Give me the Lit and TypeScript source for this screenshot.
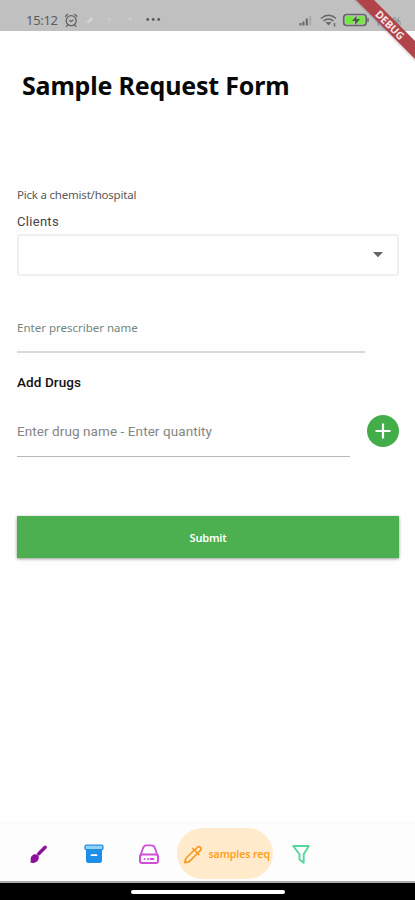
import { LitElement, html, css, svg } from "lit";
import { customElement } from "lit/decorators.js";

@customElement("status-bar")
class StatusBar extends LitElement {
  static styles = css`
    :host { display: flex; align-items: center; box-sizing: border-box; height: 31px; padding: 8px 12px 0 26px; background: #c0c0c0; color: #5c5c5c; font: 13px "Noto Sans", sans-serif; }
    .time { width: 37px; line-height: 20px; letter-spacing: -0.3px; white-space: nowrap; }
    .left { flex: none; width: 136px; height: 20px; }
    .right { flex: none; width: 104px; height: 20px; margin-left: auto; }
  `;
  render() {
    return html`
      <span class="time">15:12</span>
      <svg class="left" viewBox="63 9 136 20" fill="none" stroke="#626262">
        <circle cx="71.2" cy="19.700" r="5" stroke-width="1.3" />
        <path d="M65 15.800l3-2.8M77.4 15.800l-3-2.8M67.6 24l-1.5 1.8M74.8 24l1.5 1.8M69.2 19.3l2 1.3 2.2-2" stroke-width="1.2" />
        <path d="M87.5 21.5l5-4.5" stroke="#d3d3d3" stroke-width="3" />
        <path d="M108 17l3 3M129 17l2.5 2.5" stroke="#cbcbcb" stroke-width="2.5" />
        <g fill="#5c5c5c" stroke="none"><circle cx="147.7" cy="18.5" r="1.4" /><circle cx="153.2" cy="18.5" r="1.4" /><circle cx="158.7" cy="18.5" r="1.4" /></g>
      </svg>
      <svg class="right" viewBox="299 9 104 20" fill="none" stroke="#666">
        <path d="M300.5 24.500v-2.500M303.5 24.500v-4M306.8 24.500v-7" stroke-width="2" />
        <path d="M310.2 24.500v-9.500" stroke="#aaa" stroke-width="2" />
        <path d="M321 17.500q7.500-6.500 15 0M323.500 20q5-4 10 0" stroke-width="1.6" />
        <path d="M325.500 21h6l-3 3.500z" fill="#666" stroke="none" />
        <path d="M334.500 25.500v-3.500" stroke-width="1.500" />
        <rect x="343.700" y="13.500" width="22.500" height="11" rx="3" stroke-width="1.700" />
        <rect x="345.500" y="15.300" width="7.500" height="7.500" fill="#73e83f" stroke="none" />
        <rect x="357.300" y="15.300" width="7.200" height="7.500" fill="#73e83f" stroke="none" />
        <path d="M356.500 14.500l-4.500 5.500h3v4l5-6h-3.500z" fill="#4c5a48" stroke="none" />
        <path d="M368 17v4" stroke-width="1.500" />
        <text x="375" y="24.500" font-size="12" fill="#888" stroke="none" textLength="26" lengthAdjust="spacingAndGlyphs">100%</text>
      </svg>`;
  }
}

@customElement("bottom-nav")
class BottomNav extends LitElement {
  static styles = css`
    :host { display: block; }
    .tabs { display: flex; align-items: center; box-sizing: border-box; height: 60px; padding: 2px 0 0 27px; background: #fdfdfd; border-top: 1px solid #fafafa; border-bottom: 2px solid #aaa; }
    .tab { display: flex; align-items: center; justify-content: center; width: 22px; height: 22px; }
    .box { margin-left: 34px; }
    .drive { margin-left: 33px; }
    .active { width: 96px; height: 51px; box-sizing: border-box; margin-left: 17px; padding: 0 3px 0 5px; border-radius: 26px; background: #ffeacc; justify-content: space-between; }
    .filter { margin-left: 17px; }
    .label { color: #ff9d1c; font: 600 10.5px/20px "Noto Sans", sans-serif; letter-spacing: -.05px; padding-top: 1px; white-space: nowrap; }
    svg { display: block; width: 22px; height: 22px; flex: none; }
    .home { display: flex; justify-content: center; box-sizing: border-box; height: 17px; padding-top: 7px; background: #000; }
    .pill { width: 154px; height: 4px; border-radius: 2px; background: #fff; }
  `;
  icon(body: unknown) {
    return html`<svg viewBox="0 0 22 22" fill="none" stroke-linejoin="round" stroke-linecap="round">${body}</svg>`;
  }
  render() {
    return html`
      <div class="tabs">
        <div class="tab">${this.icon(svg`
          <path d="M11.700 10.800L18.200 4.300" stroke="#8e0f9e" stroke-width="3.400" />
          <path d="M8.500 11.200c2.900.2 4.100 2.700 3 5-1.500 3.600-5.400 4.500-8.500 3 1-.6.7-1.500.7-2.800 0-2.900 1.800-5.300 4.800-5.200z" fill="#8e0f9e" />`)}</div>
        <div class="tab box">${this.icon(svg`
          <path d="M3 7h16v10.500a2.500 2.500 0 0 1-2.500 2.500h-11a2.500 2.500 0 0 1-2.500-2.500z" fill="#1d8fe8" />
          <rect x="2" y="2.200" width="18" height="4.500" rx="1.500" fill="#8fd3f8" stroke="#278ddd" stroke-width="1.300" />
          <path d="M8.500 12.200h5" stroke="#fff" stroke-width="1.800" />`)}</div>
        <div class="tab drive">${this.icon(svg`
          <path d="M2.600 12.200l2.400-7q.9-2.800 3.600-2.800h4.800q2.700 0 3.600 2.800l2.400 7" stroke="#cf50d8" stroke-width="1.800" />
          <rect x="2" y="11.500" width="18" height="8.500" rx="2" stroke="#cf50d8" stroke-width="2" />
          <path d="M6.500 16h.1M10 16h.1M12.500 16h3" stroke="#cf50d8" stroke-width="1.800" />`)}</div>
        <div class="tab active">${this.icon(svg`
          <path d="M12.200 7l-8.500 8.500-.9 4.200 4.200-.9 8.500-8.500M10.800 5.500l6 6M12.700 7.300l2.700-3q1.500-1.500 3 0t0 3l-3 3" stroke="#f99a22" stroke-width="1.700" />`)}
          <span class="label">samples req</span></div>
        <div class="tab filter">${this.icon(svg`
          <path d="M3.200 3h15.600l-5.100 8.300v8.500l-4.200-3.200v-5.300z" stroke="#55d69d" stroke-width="1.900" />`)}</div>
      </div>
      <div class="home"><div class="pill"></div></div>`;
  }
}

@customElement("app-root")
class AppRoot extends LitElement {
  static styles = css`
    :host { display: flex; flex-direction: column; position: relative; height: 900px; overflow: hidden; background: #fefefe; font-family: "Noto Sans", sans-serif; }
    .form { flex: 1; display: flex; flex-direction: column; padding: 0 17px; white-space: nowrap; }
    .title { margin: 36px 0 0 5px; font-size: 25px; line-height: 36px; font-weight: 700; letter-spacing: -.18px; color: #080808; }
    .hint { margin-top: 83px; font-size: 11.5px; line-height: 18px; letter-spacing: -.21px; color: #595959; }
    .label { margin-top: 8px; font: 13px/20px Roboto, sans-serif; color: #444; letter-spacing: .3px; }
    .select { display: flex; align-items: center; justify-content: flex-end; box-sizing: border-box; width: 382px; height: 42px; margin-top: 2px; padding-right: 13px; border: 2px solid #efefef; border-radius: 3px; }
    .arrow { width: 12px; height: 6px; }
    .prescriber { box-sizing: border-box; width: 348px; height: 36px; margin-top: 41px; border-bottom: 2px solid #d9d9d9; font-size: 11.5px; line-height: 22px; color: #71877f; }
    .section { margin-top: 18px; font: 500 13.5px/22px Roboto, sans-serif; letter-spacing: .1px; color: #111; }
    .row { display: flex; align-items: flex-start; justify-content: space-between; width: 382px; margin-top: 22px; }
    .drug { box-sizing: border-box; width: 333px; height: 42px; border-bottom: 1.500px solid #b7b7b7; font: 13.5px/33px Roboto, sans-serif; letter-spacing: .08px; color: #858585; }
    .add { width: 32px; height: 32px; }
    .submit { display: flex; align-items: center; justify-content: center; width: 382px; height: 42px; margin-top: 59px; background: #4caf50; color: #fff; font-size: 11px; font-weight: 600; letter-spacing: -.2px; box-shadow: 0 1px 3px rgba(0,0,0,.4); }
    .corner { position: absolute; top: 0; right: 0; width: 66px; height: 66px; }
    .debug { font: 700 10.5px "Noto Sans", sans-serif; fill: #f5e6e6; }
  `;
  render() {
    return html`
      <status-bar></status-bar>
      <main class="form">
        <div class="title">Sample Request Form</div>
        <div class="hint">Pick a chemist/hospital</div>
        <div class="label">Clients</div>
        <div class="select"><svg class="arrow" viewBox="0 0 12 6"><path d="M1 0h10L6 5.300z" fill="#666" /></svg></div>
        <div class="prescriber">Enter prescriber name</div>
        <div class="section">Add Drugs</div>
        <div class="row">
          <div class="drug">Enter drug name - Enter quantity</div>
          <svg class="add" viewBox="0 0 32 32"><circle cx="16" cy="16" r="16" fill="#43ad49" /><path d="M16 8.500v15M8.500 16h15" stroke="#fff" stroke-width="2.200" /></svg>
        </div>
        <div class="submit">Submit</div>
      </main>
      <bottom-nav></bottom-nav>
      <svg class="corner" viewBox="349 0 66 66">
        <path d="M354 0h20l41 41v21z" fill="#000" opacity=".1" />
        <path d="M356 0h18l41 41v18z" fill="#b0444a" />
        <text class="debug" transform="translate(390 25) rotate(45)" text-anchor="middle" y="4" textLength="36">DEBUG</text>
      </svg>`;
  }
}
